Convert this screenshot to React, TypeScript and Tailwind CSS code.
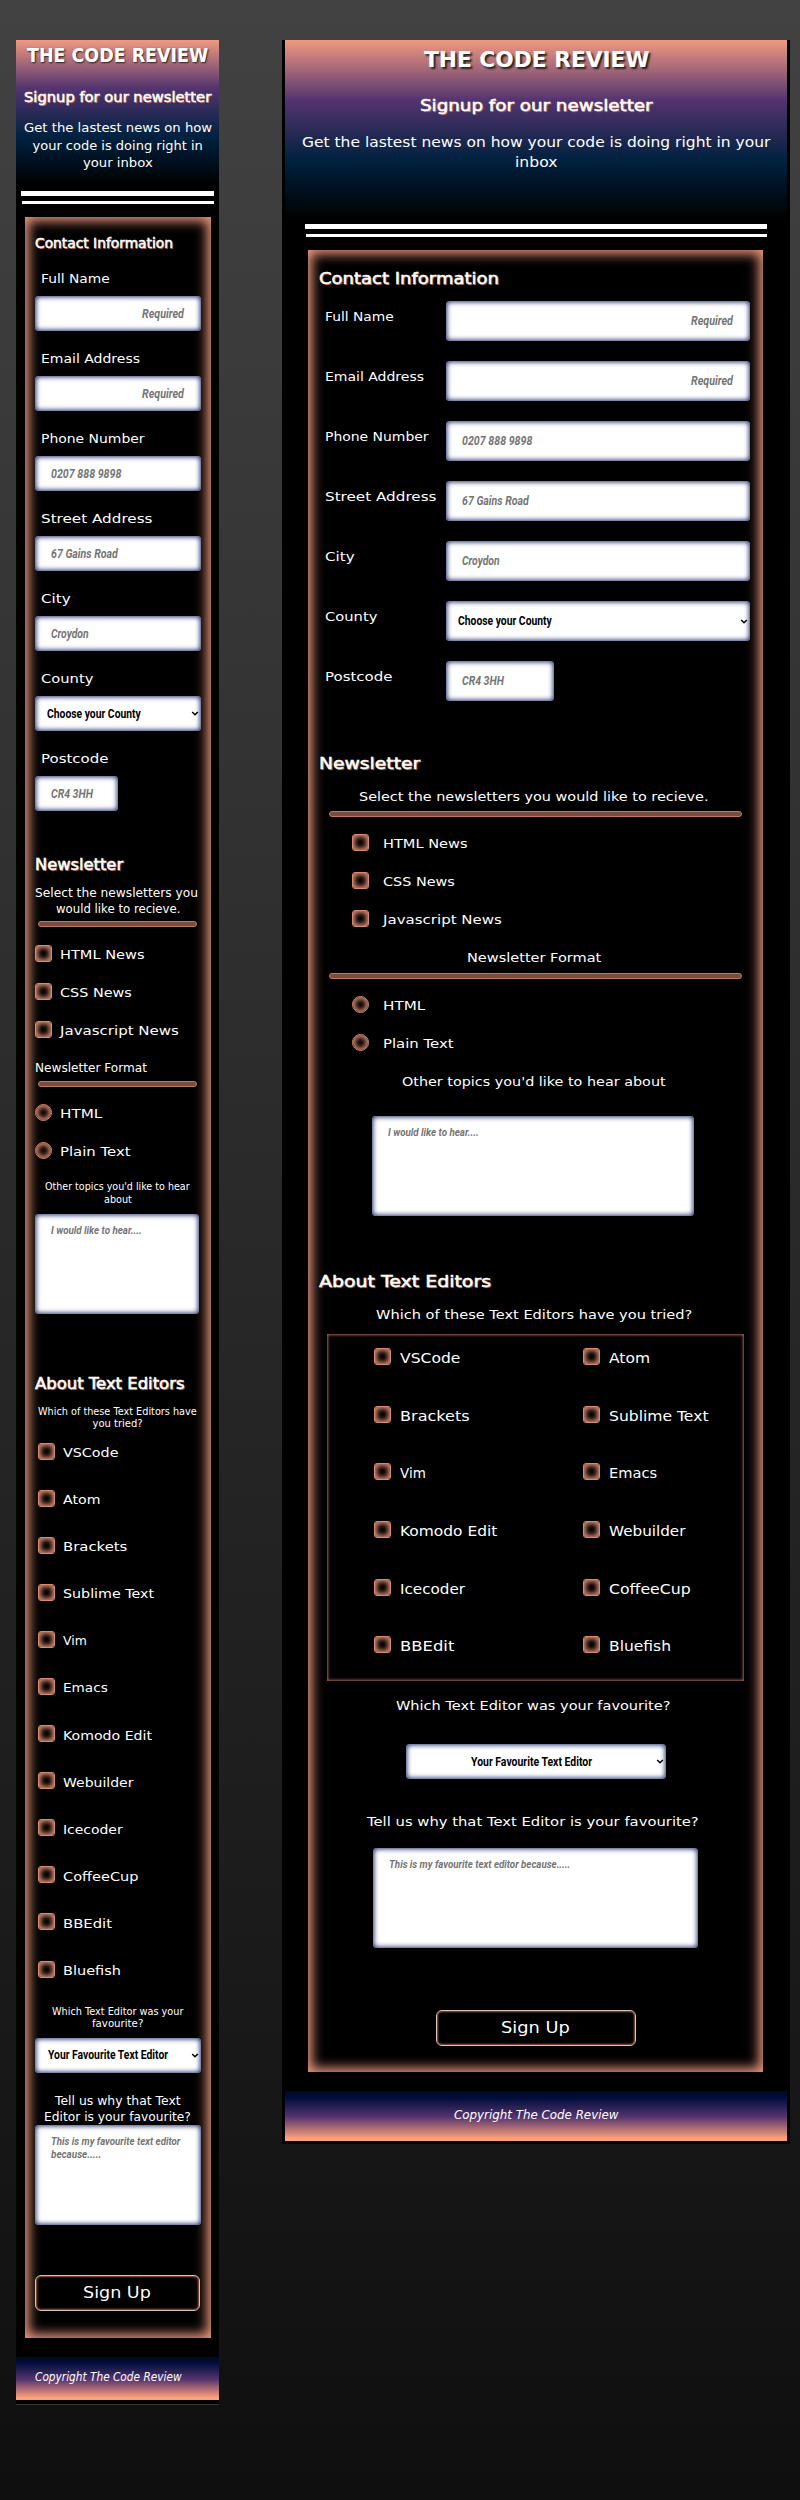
import { useLayoutEffect, useRef, useState } from "react";
import type { ReactNode } from "react";

const DISPLAY = "font-['DejaVu_Sans',sans-serif]";
const CONDENSED = "font-['Roboto',sans-serif] font-bold";
const FIELD = "rounded-[4px] bg-white shadow-[inset_0_0_5px_1px_#1f2f6c]";
const HEAD = "[text-shadow:1px_1px_1px_#c4633f] [-webkit-text-stroke:0.5px_#fff]";

/* Stretches a line of text to a given set width. */
function Fit({ w, children, className = "" }: { w: number; children: string; className?: string }) {
  const ref = useRef<HTMLSpanElement>(null);
  const [k, setK] = useState(1);
  useLayoutEffect(() => {
    if (ref.current) setK(w / ref.current.offsetWidth);
  }, [w, children]);
  return (
    <span className={`block shrink-0 whitespace-nowrap text-left ${className}`} style={{ width: w }}>
      <span ref={ref} className="inline-block origin-left" style={{ transform: `scaleX(${k})` }}>
        {children}
      </span>
    </span>
  );
}

function Line({ w, className, children }: { w: number; className: string; children: string }) {
  return (
    <div className={`flex shrink-0 items-center ${className}`}>
      <Fit w={w}>{children}</Fit>
    </div>
  );
}

function Chevron({ className = "" }: { className?: string }) {
  return (
    <svg className={`h-[5px] w-[8px] shrink-0 ${className}`} viewBox="0 0 8 5">
      <path d="M1.2 1 L4 3.8 L6.8 1" fill="none" stroke="#000" strokeWidth="1.5" />
    </svg>
  );
}

type Kind = "required" | "text" | "select" | "short";
type FieldDef = { label: string; labelWidth: number; text: string; textWidth: number; kind: Kind };

const FIELDS: FieldDef[] = [
  { label: "Full Name", labelWidth: 69, text: "Required", textWidth: 42, kind: "required" },
  { label: "Email Address", labelWidth: 99, text: "Required", textWidth: 42, kind: "required" },
  { label: "Phone Number", labelWidth: 104, text: "0207 888 9898", textWidth: 70, kind: "text" },
  { label: "Street Address", labelWidth: 111, text: "67 Gains Road", textWidth: 67, kind: "text" },
  { label: "City", labelWidth: 29, text: "Croydon", textWidth: 38, kind: "text" },
  { label: "County", labelWidth: 52, text: "Choose your County", textWidth: 94, kind: "select" },
  { label: "Postcode", labelWidth: 68, text: "CR4 3HH", textWidth: 42, kind: "short" },
];

const EDITORS: { name: string; w: [number, number] }[] = [
  { name: "VSCode", w: [55, 60] },
  { name: "Atom", w: [37, 41] },
  { name: "Brackets", w: [64, 70] },
  { name: "Sublime Text", w: [91, 99] },
  { name: "Vim", w: [24, 26] },
  { name: "Emacs", w: [45, 48] },
  { name: "Komodo Edit", w: [89, 97] },
  { name: "Webuilder", w: [70, 76] },
  { name: "Icecoder", w: [60, 65] },
  { name: "CoffeeCup", w: [76, 82] },
  { name: "BBEdit", w: [49, 54] },
  { name: "Bluefish", w: [58, 62] },
];

const INDENT = { required: "justify-end pr-[17px]", text: "pl-[16px]", short: "pl-[16px]", select: "pl-[12px]" };

function Control({ def, className }: { def: FieldDef; className: string }) {
  return (
    <div className={`flex items-center ${FIELD} ${INDENT[def.kind]} ${className}`}>
      <Fit
        w={def.textWidth}
        className={`${CONDENSED} text-[12px] ${def.kind === "select" ? "text-black" : "italic text-[#757575]"}`}
      >
        {def.text}
      </Fit>
      {def.kind === "select" && <Chevron className="mr-[2px] ml-auto" />}
    </div>
  );
}

function Tick({ round = false }: { round?: boolean }) {
  return (
    <span
      className={`block size-[17px] shrink-0 border border-[#d98a6f] bg-black shadow-[inset_0_0_5px_2px_#d98a6f] ${
        round ? "rounded-full" : "rounded-[3px]"
      }`}
    />
  );
}

function Choice({ w, round, gap, children }: { w: number; round?: boolean; gap: string; children: string }) {
  return (
    <div className={`flex h-[38px] items-start ${gap}`}>
      <Tick round={round} />
      <Line w={w} className="h-[20px] text-[13px]">{children}</Line>
    </div>
  );
}

function Bar({ className }: { className: string }) {
  return (
    <div className={`h-[6px] shrink-0 rounded-full border border-[#c17a62] bg-[#7a4c40] ${className}`} />
  );
}

function Panel({ className, children }: { className: string; children: ReactNode }) {
  return (
    <div className={`flex shrink-0 flex-col bg-black shadow-[inset_0_0_12px_4px_#e9967a] ${className}`}>{children}</div>
  );
}

function Mobile() {
  return (
    <div className="flex h-[2365px] w-[203px] shrink-0 flex-col border-b border-[#363636] bg-black">
      <header className="flex h-[151px] shrink-0 flex-col items-center bg-[linear-gradient(180deg,#f09980_0px,#54346f_48px,#00213f_97px,#000_145px)]">
        <Line w={181} className="mt-[4px] h-[22px] text-[19px] font-bold [text-shadow:1px_1px_2px_#222]">THE CODE REVIEW</Line>
        <Line w={187} className="mt-[21px] h-[20px] text-[14px] [text-shadow:1px_1px_1px_#d06a55] [-webkit-text-stroke:0.5px_#fff]">Signup for our newsletter</Line>
        <Line w={188} className="mt-[12px] h-[17.5px] text-[13px]">Get the lastest news on how</Line>
        <Line w={170} className="h-[17.5px] text-[13px]">your code is doing right in</Line>
        <Line w={70} className="h-[17.5px] text-[13px]">your inbox</Line>
      </header>
      <div className="mx-auto h-[5px] w-[193px] shrink-0 bg-white" />
      <div className="mx-auto mt-[5px] h-[3px] w-[192px] shrink-0 bg-white" />
      <Panel className="mx-auto mt-[13px] h-[2121px] w-[186px] px-[10px]">
        <Line w={138} className={`mt-[16px] h-[20px] text-[14px] ${HEAD}`}>Contact Information</Line>
        <div className="mt-[16px] flex flex-col">
          {FIELDS.map((f) => (
            <div key={f.label} className="h-[80px]">
              <Line w={f.labelWidth} className="ml-[6px] h-[20px] text-[13px]">{f.label}</Line>
              <Control def={f} className={`mt-[7px] h-[35px] ${f.kind === "short" ? "w-[83px]" : "w-[166px]"}`} />
            </div>
          ))}
        </div>
        <Line w={88} className={`mt-[26px] h-[20px] text-[15px] ${HEAD}`}>Newsletter</Line>
        <Line w={163} className="mt-[10px] h-[16px] text-[12px]">Select the newsletters you</Line>
        <Line w={124} className="h-[16px] justify-center text-[12px]">would like to recieve.</Line>
        <Bar className="mt-[4px] mr-[4px] ml-[3px]" />
        <div className="mt-[18px] h-[114px]">
          <Choice w={84} gap="gap-[8px]">HTML News</Choice>
          <Choice w={72} gap="gap-[8px]">CSS News</Choice>
          <Choice w={119} gap="gap-[8px]">Javascript News</Choice>
        </div>
        <Line w={112} className="mt-[1px] h-[16px] text-[12px]">Newsletter Format</Line>
        <Bar className="mt-[5px] mr-[4px] ml-[3px]" />
        <div className="mt-[17px] h-[76px]">
          <Choice w={42} gap="gap-[8px]" round>HTML</Choice>
          <Choice w={71} gap="gap-[8px]" round>Plain Text</Choice>
        </div>
        <Line w={145} className="h-[13px] justify-center text-[10px]">Other topics you'd like to hear</Line>
        <Line w={28} className="h-[13px] justify-center text-[10px]">about</Line>
        <div className={`mt-[8px] h-[100px] w-[164px] shrink-0 pt-[8px] pl-[16px] ${FIELD}`}>
          <Fit w={91} className={`${CONDENSED} text-[11.5px] text-[#757575] italic`}>I would like to hear....</Fit>
        </div>
        <Line w={149} className={`mt-[60px] h-[20px] text-[15px] ${HEAD}`}>About Text Editors</Line>
        <Line w={159} className="mt-[11px] h-[12.5px] justify-center text-[10px]">Which of these Text Editors have</Line>
        <Line w={50} className="h-[12.5px] justify-center text-[10px]">you tried?</Line>
        <div className="mt-[13px] h-[561.8px] shrink-0 pl-[3px]">
          {EDITORS.map((e) => (
            <div key={e.name} className="flex h-[47.05px] items-start gap-[8px]">
              <Tick />
              <Line w={e.w[0]} className="h-[20px] text-[13px]">{e.name}</Line>
            </div>
          ))}
        </div>
        <Line w={131} className="h-[12.5px] justify-center text-[10px]">Which Text Editor was your</Line>
        <Line w={51} className="h-[12.5px] justify-center text-[10px]">favourite?</Line>
        <div className={`mt-[8px] flex h-[35px] w-[166px] shrink-0 items-center pl-[13px] ${FIELD}`}>
          <Fit w={120} className={`${CONDENSED} text-[12px] text-black`}>Your Favourite Text Editor</Fit>
          <Chevron className="mr-[2px] ml-auto" />
        </div>
        <Line w={126} className="mt-[20px] h-[16px] justify-center text-[12px]">Tell us why that Text</Line>
        <Line w={147} className="h-[16px] justify-center text-[12px]">Editor is your favourite?</Line>
        <div className={`h-[100px] w-[166px] shrink-0 pt-[10px] pl-[16px] ${FIELD}`}>
          <Fit w={129} className={`${CONDENSED} text-[11.5px] leading-[13px] text-[#757575] italic`}>This is my favourite text editor</Fit>
          <Fit w={50} className={`${CONDENSED} text-[11.5px] leading-[13px] text-[#757575] italic`}>because.....</Fit>
        </div>
        <button className="mt-[50px] flex h-[36px] w-[165px] shrink-0 items-center justify-center rounded-[6px] border border-[#d9c4bc] pt-[1px] shadow-[inset_0_0_2px_1px_#a0583f]">
          <Fit w={68} className="text-[16.5px]">Sign Up</Fit>
        </button>
      </Panel>
      <footer className="mt-[19px] flex h-[43px] shrink-0 items-center bg-[linear-gradient(180deg,#000a1e_0%,#000d3c_14%,#54346f_52%,#ffa07a_95%)] pl-[19px]">
        <Fit w={147} className="pb-[2px] text-[11.5px] italic">Copyright The Code Review</Fit>
      </footer>
    </div>
  );
}

function Desktop() {
  return (
    <div className="flex h-[2104px] w-[508px] shrink-0 flex-col bg-black">
      <header className="mx-auto flex h-[184px] w-[502px] shrink-0 flex-col items-center bg-[linear-gradient(180deg,#f09980_0px,#54346f_60px,#00213f_120px,#000_180px)]">
        <Line w={225} className="mt-[7px] h-[24px] text-[22px] font-bold [text-shadow:2px_2px_2px_#222]">THE CODE REVIEW</Line>
        <Line w={233} className="mt-[25px] h-[20px] text-[16px] [text-shadow:1px_1px_1px_#d06a55] [-webkit-text-stroke:0.5px_#fff]">Signup for our newsletter</Line>
        <Line w={468} className="mt-[17px] h-[20px] text-[14.5px]">Get the lastest news on how your code is doing right in your</Line>
        <Line w={42} className="h-[20px] text-[14.5px]">inbox</Line>
      </header>
      <div className="mx-auto h-[5px] w-[462px] shrink-0 bg-white" />
      <div className="mx-auto mt-[5px] h-[3px] w-[461px] shrink-0 bg-white" />
      <Panel className="mt-[13px] ml-[26px] h-[1822px] w-[455px]">
        <Line w={180} className={`mt-[19px] ml-[11px] h-[20px] text-[16.5px] ${HEAD}`}>Contact Information</Line>
        <div className="mt-[12px] flex flex-col pl-[17px]">
          {FIELDS.map((f) => (
            <div key={f.label} className="flex h-[60px] items-start">
              <div className="w-[121px] pt-[6px]">
                <Line w={f.labelWidth} className="h-[20px] text-[13px]">{f.label}</Line>
              </div>
              <Control def={f} className={`h-[40px] ${f.kind === "short" ? "w-[108px]" : "w-[304px]"}`} />
            </div>
          ))}
        </div>
        <Line w={101} className={`mt-[33px] ml-[11px] h-[20px] text-[16.5px] ${HEAD}`}>Newsletter</Line>
        <Line w={349} className="mt-[13px] h-[20px] pl-[51px] text-[13px]">Select the newsletters you would like to recieve.</Line>
        <Bar className="mt-[4px] ml-[21px] w-[413px]" />
        <div className="mt-[17px] h-[114px] pl-[43.5px]">
          <Choice w={84} gap="gap-[14.5px]">HTML News</Choice>
          <Choice w={72} gap="gap-[14.5px]">CSS News</Choice>
          <Choice w={119} gap="gap-[14.5px]">Javascript News</Choice>
        </div>
        <Line w={134} className="h-[20px] pl-[158.5px] text-[13px]">Newsletter Format</Line>
        <Bar className="mt-[5px] ml-[21px] w-[413px]" />
        <div className="mt-[17px] h-[76px] pl-[43.5px]">
          <Choice w={42} gap="gap-[14.5px]" round>HTML</Choice>
          <Choice w={71} gap="gap-[14.5px]" round>Plain Text</Choice>
        </div>
        <Line w={264} className="h-[20px] pl-[94px] text-[13px]">Other topics you'd like to hear about</Line>
        <div className={`mt-[24px] ml-[64px] h-[100px] w-[322px] shrink-0 pt-[8px] pl-[16px] ${FIELD}`}>
          <Fit w={91} className={`${CONDENSED} text-[11.5px] text-[#757575] italic`}>I would like to hear....</Fit>
        </div>
        <Line w={172} className={`mt-[56px] ml-[11px] h-[20px] text-[16.5px] ${HEAD}`}>About Text Editors</Line>
        <Line w={316} className="mt-[13px] h-[20px] pl-[68px] text-[13px]">Which of these Text Editors have you tried?</Line>
        <div className="mt-[9px] ml-[19px] h-[347px] w-[417px] shrink-0 shadow-[inset_0_0_3px_1px_#a8664f]">
          <div className="grid grid-cols-[209px_1fr] pt-[14px] pl-[46.5px]">
            {EDITORS.map((e) => (
              <div key={e.name} className="flex h-[57.7px] items-start gap-[9.5px]">
                <Tick />
                <Line w={e.w[1]} className="h-[21px] text-[14px]">{e.name}</Line>
              </div>
            ))}
          </div>
        </div>
        <Line w={275} className="mt-[15px] h-[20px] pl-[88px] text-[13px]">Which Text Editor was your favourite?</Line>
        <div className={`mt-[28px] ml-[98px] flex h-[35px] w-[260px] shrink-0 items-center pl-[65px] ${FIELD}`}>
          <Fit w={121} className={`${CONDENSED} text-[12px] text-black`}>Your Favourite Text Editor</Fit>
          <Chevron className="mr-[2px] ml-auto" />
        </div>
        <Line w={332} className="mt-[33px] h-[20px] pl-[59px] text-[13px]">Tell us why that Text Editor is your favourite?</Line>
        <div className={`mt-[16px] ml-[65px] h-[100px] w-[325px] shrink-0 pt-[8px] pl-[16px] ${FIELD}`}>
          <Fit w={181} className={`${CONDENSED} text-[11.5px] text-[#757575] italic`}>This is my favourite text editor because.....</Fit>
        </div>
        <button className="mt-[62px] ml-[127.5px] flex h-[36px] w-[200px] shrink-0 items-center justify-center rounded-[6px] border border-[#d9c4bc] pt-[1px] shadow-[inset_0_0_2px_1px_#a0583f]">
          <Fit w={69} className="text-[16.5px]">Sign Up</Fit>
        </button>
      </Panel>
      <footer className="mx-auto mt-[19px] flex h-[50px] w-[502px] shrink-0 items-center justify-center bg-[linear-gradient(180deg,#000a1e_0%,#000d3c_14%,#54346f_52%,#ffa07a_95%)]">
        <Fit w={164} className="pb-[3px] text-[12px] italic">Copyright The Code Review</Fit>
      </footer>
    </div>
  );
}

export default function App() {
  return (
    <div
      className={`flex h-[2500px] w-[800px] items-start gap-[63px] overflow-hidden bg-[linear-gradient(180deg,#424242,#0f0f0f)] pt-[40px] pl-[16px] text-white ${DISPLAY}`}
    >
      <Mobile />
      <Desktop />
    </div>
  );
}
